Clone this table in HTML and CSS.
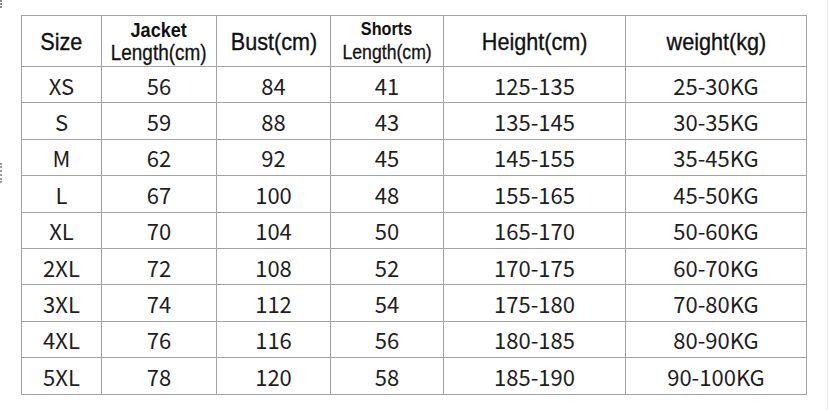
FILE: index.html
```html
<!DOCTYPE html>
<html>
<head>
<meta charset="utf-8">
<link rel="stylesheet" href="styles.css">
</head>
<body>
<div class="page">
  <div class="edge"><span class="mark mark-top"></span><span class="mark mark-mid"></span></div>
  <div class="sheet">
    <table class="size-table">
      <colgroup>
        <col class="c1"><col class="c2"><col class="c3"><col class="c4"><col class="c5"><col class="c6">
      </colgroup>
      <thead>
        <tr class="head-row">
          <th><span class="h-big">Size</span></th>
          <th><span class="h-two"><span class="h-bold">Jacket</span><span class="h-sub">Length(cm)</span></span></th>
          <th><span class="h-big">Bust(cm)</span></th>
          <th><span class="h-two"><span class="h-bold h-bold-small">Shorts</span><span class="h-sub h-sub-small">Length(cm)</span></span></th>
          <th><span class="h-big">Height(cm)</span></th>
          <th><span class="h-big">weight(kg)</span></th>
        </tr>
      </thead>
      <tbody>
        <tr><td>XS</td><td>56</td><td>84</td><td>41</td><td>125-135</td><td>25-30KG</td></tr>
        <tr><td>S</td><td>59</td><td>88</td><td>43</td><td>135-145</td><td>30-35KG</td></tr>
        <tr><td>M</td><td>62</td><td>92</td><td>45</td><td>145-155</td><td>35-45KG</td></tr>
        <tr><td>L</td><td>67</td><td>100</td><td>48</td><td>155-165</td><td>45-50KG</td></tr>
        <tr><td>XL</td><td>70</td><td>104</td><td>50</td><td>165-170</td><td>50-60KG</td></tr>
        <tr><td>2XL</td><td>72</td><td>108</td><td>52</td><td>170-175</td><td>60-70KG</td></tr>
        <tr><td>3XL</td><td>74</td><td>112</td><td>54</td><td>175-180</td><td>70-80KG</td></tr>
        <tr><td>4XL</td><td>76</td><td>116</td><td>56</td><td>180-185</td><td>80-90KG</td></tr>
        <tr><td>5XL</td><td>78</td><td>120</td><td>58</td><td>185-190</td><td>90-100KG</td></tr>
      </tbody>
    </table>
  </div>
  <div class="rule"></div>
</div>
</body>
</html>
```

FILE: styles.css
```css
html, body {
  margin: 0;
  padding: 0;
  background: #ffffff;
}

.page {
  display: flex;
  width: 828px;
  height: 410px;
  overflow: hidden;
}

.edge {
  width: 3px;
  display: flex;
  flex-direction: column;
}

.mark {
  display: block;
  width: 2px;
  border-left: 2px dotted #8a8a8a;
}

.mark-top {
  height: 8px;
}

.mark-mid {
  height: 20px;
  margin-top: 155px;
  border-left-color: #9a9a9a;
}

.sheet {
  padding: 15px 0 0 18px;
}

.size-table {
  border-collapse: collapse;
  table-layout: fixed;
  width: 785px;
}

.c1 { width: 80px; }
.c2 { width: 115px; }
.c3 { width: 114px; }
.c4 { width: 113px; }
.c5 { width: 182px; }
.c6 { width: 181px; }

.size-table th,
.size-table td {
  border: 1px solid #a3a3a3;
  padding: 0;
  text-align: center;
  vertical-align: middle;
}

.head-row th {
  height: 50px;
  font-family: "Liberation Sans", Arial, sans-serif;
  font-weight: normal;
  color: #111111;
}

.h-big {
  display: inline-block;
  font-size: 24px;
  line-height: 26px;
  transform: scaleX(0.9);
  -webkit-text-stroke: 0.35px #111111;
  margin-top: 2px;
}

.h-two {
  display: inline-flex;
  flex-direction: column;
  align-items: center;
  margin-top: 1px;
}

.h-bold {
  display: block;
  font-size: 21px;
  line-height: 22px;
  font-weight: bold;
  transform: scaleX(0.86);
}

.h-sub {
  display: block;
  font-size: 22px;
  line-height: 24px;
  transform: scaleX(0.86);
  -webkit-text-stroke: 0.3px #111111;
}

.h-bold-small {
  font-size: 18px;
  line-height: 21px;
  transform: scaleX(0.9);
}

.h-sub-small {
  font-size: 21px;
  line-height: 24px;
  transform: scaleX(0.84);
}

.size-table td {
  height: 35.4px;
  font-family: "Noto Sans CJK SC", "Noto Sans", sans-serif;
  font-size: 22px;
  line-height: 26px;
  color: #1e1e1e;
}

.rule {
  width: 1px;
  height: 410px;
  margin-left: 20px;
  background: #ededed;
}
```
